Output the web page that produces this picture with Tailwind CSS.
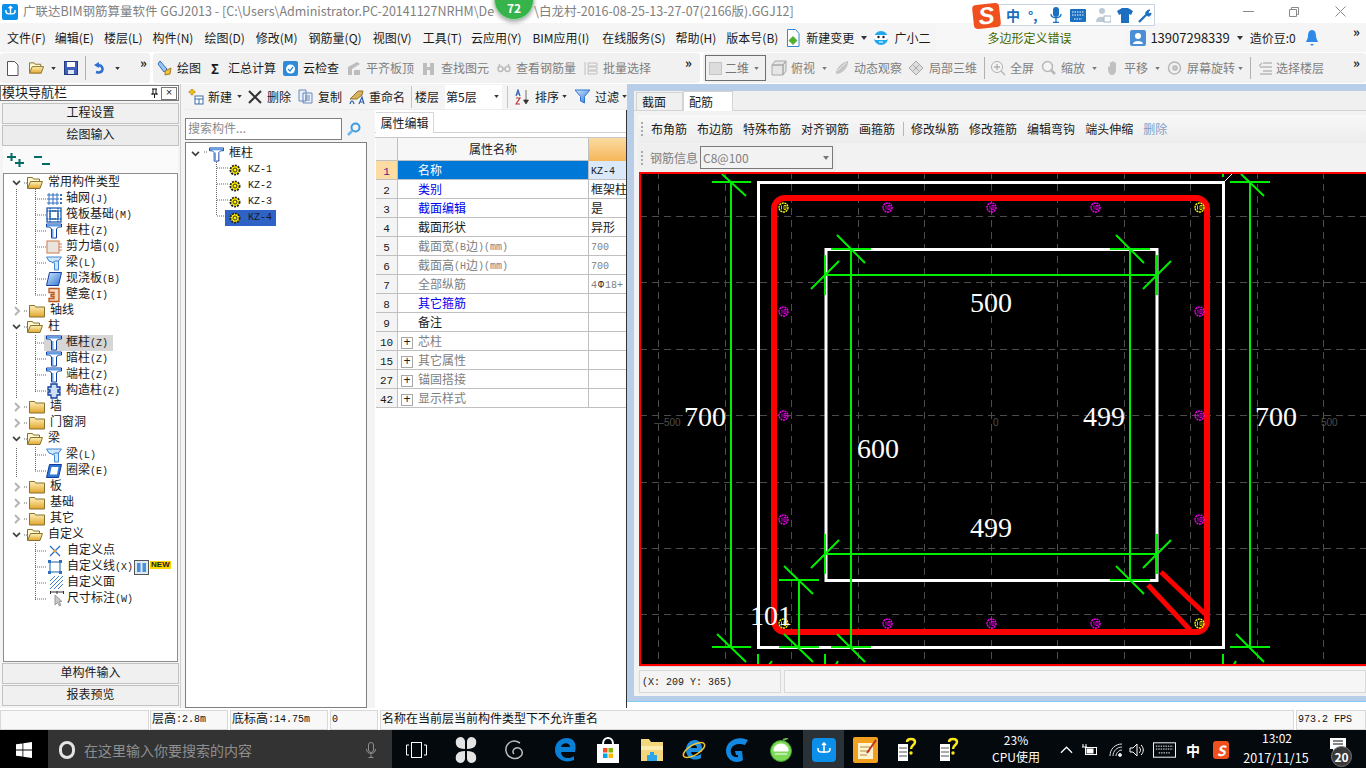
<!DOCTYPE html>
<html lang="zh">
<head>
<meta charset="utf-8">
<title>GGJ2013</title>
<script src="https://cdn.jsdelivr.net/npm/@tailwindcss/browser@4"></script>
</head>
<body class="bg-white">
<svg width="0" height="0" class="absolute">
  <defs>
    <linearGradient id="fg" x1="0" y1="0" x2="0" y2="1"><stop offset="0" stop-color="#fff3b8"/><stop offset="1" stop-color="#e0a52c"/></linearGradient>
    <linearGradient id="bl" x1="0" y1="0" x2="1" y2="1"><stop offset="0" stop-color="#cfe6ff"/><stop offset="1" stop-color="#2f76d2"/></linearGradient>
    <symbol id="c" viewBox="0 0 6 4"><path d="M0 0h6L3 4z" fill="#333"/></symbol>
    <symbol id="cg" viewBox="0 0 6 4"><path d="M0 0h6L3 4z" fill="#777"/></symbol>
    <symbol id="down" viewBox="0 0 10 7"><path d="M1 1l4 4 4-4" fill="none" stroke="#404040" stroke-width="2"/></symbol>
    <symbol id="right" viewBox="0 0 7 10"><path d="M1 1l4 4-4 4" fill="none" stroke="#b5b5b5" stroke-width="2"/></symbol>
    <symbol id="fc" viewBox="0 0 16 14"><path d="M.5 3V1.500h5l1 1.500h9v10H.5z" fill="url(#fg)" stroke="#86712e"/></symbol>
    <symbol id="fo" viewBox="0 0 16 14"><path d="M.5 12V1.500h5l1 1.500h6v2.500" fill="#fff7d2" stroke="#86712e"/><path d="M.5 12.500L3.500 5.500h12L13 12.500z" fill="url(#fg)" stroke="#86712e"/></symbol>
    <symbol id="t" viewBox="0 0 16 16"><path d="M.5 1h15v3h-3l-2 2v9h-5V6l-2-2h-3z" fill="#fff" stroke="#0f3c9e"/><path d="M1 1.500h14v2H1z" fill="#5a9ce6"/><path d="M6 6h1.500v8.500H6z" fill="#6fa8e8"/></symbol>
    <symbol id="gear" viewBox="0 0 12 12"><circle cx="6" cy="6" r="4.600" fill="#ffef00" stroke="#222" stroke-width="1.800" stroke-dasharray="2 1"/><circle cx="6" cy="6" r="2" fill="#ffef00" stroke="#333"/></symbol>
    <symbol id="mg" viewBox="0 0 11 11"><circle cx="5.500" cy="5.500" r="4.500" fill="none" stroke="#ff00ff" stroke-width="1.300" stroke-dasharray="2 .7"/><path d="M4 3.500v4M6 3.500h2v4H6z" fill="none" stroke="#ff00ff" stroke-width=".8"/></symbol>
    <symbol id="yl" viewBox="0 0 11 11"><circle cx="5.500" cy="5.500" r="4.500" fill="none" stroke="#ffff00" stroke-width="1.300" stroke-dasharray="2 .7"/><path d="M3.500 3.500v4M6 3.500h2v4H6z" fill="none" stroke="#ffff00" stroke-width=".8"/></symbol>
    <symbol id="beam" viewBox="0 0 16 16"><path d="M.5 2h15l-3 4v9h-4V8L3 6z" fill="#cfe6fb" stroke="#3e86d6"/><path d="M6 8l3-2 3.500 0" fill="none" stroke="#3e86d6"/></symbol>
    <symbol id="plate" viewBox="0 0 16 16"><path d="M3.500 1.500h12l-3 13H.5z" fill="url(#bl)" stroke="#0f3c9e"/></symbol>
  </defs>
</svg>

<div class="relative w-[1366px] h-[768px] overflow-hidden flex flex-col whitespace-nowrap text-xs leading-none text-[#1a1a1a] font-['Noto_Sans_CJK_SC','Noto_Sans',sans-serif] bg-[#f4f4f4]">

  <!-- title bar -->
  <header class="h-[23px] bg-white flex items-center shrink-0">
    <div class="ml-[2px] w-[16px] h-[16px] rounded-[2px] bg-[#0b8fe8] flex items-center justify-center shrink-0">
      <svg viewBox="0 0 14 14" class="w-[13px] h-[13px]" fill="none" stroke="#fff" stroke-width="1.500"><path d="M7 1.500v8M2 5.500v1a3 3 0 0 0 3 3h4a3 3 0 0 0 3-3v-1M5 3.500l2-2 2 2"/></svg>
    </div>
    <span class="ml-[5px] w-[471px] shrink-0 text-[12.5px] text-[#808080]">广联达BIM钢筋算量软件 GGJ2013 - [C:\Users\Administrator.PC-20141127NRHM\De</span>
    <span class="ml-[40px] text-[12.5px] text-[#808080]">\白龙村-2016-08-25-13-27-07(2166版).GGJ12]</span>
    <div class="ml-auto flex items-center text-[#8a8a8a]">
      <div class="w-[11px] h-px bg-[#8a8a8a] mr-[35px]"></div>
      <svg viewBox="0 0 10 10" class="w-[10px] h-[10px] mr-[36px]" fill="none" stroke="#8a8a8a"><path d="M.5 2.500h7v7h-7zM2.500 2.500v-2h7v7h-2"/></svg>
      <svg viewBox="0 0 11 11" class="w-[11px] h-[11px] mr-[20px]" fill="none" stroke="#8a8a8a"><path d="M.5.500l10 10M10.500.500l-10 10"/></svg>
    </div>
  </header>

  <!-- menu bar -->
  <nav class="h-[29px] bg-[#f5f5f5] flex items-center shrink-0 text-[12px]">
    <span class="ml-[7px]">文件(F)</span>
    <span class="ml-[9px]">编辑(E)</span>
    <span class="ml-[10px]">楼层(L)</span>
    <span class="ml-[10px]">构件(N)</span>
    <span class="ml-[11px]">绘图(D)</span>
    <span class="ml-[11px]">修改(M)</span>
    <span class="ml-[11px]">钢筋量(Q)</span>
    <span class="ml-[11px]">视图(V)</span>
    <span class="ml-[11px]">工具(T)</span>
    <span class="ml-[9px]">云应用(Y)</span>
    <span class="ml-[11px]">BIM应用(I)</span>
    <span class="ml-[13px]">在线服务(S)</span>
    <span class="ml-[10px]">帮助(H)</span>
    <span class="ml-[10px]">版本号(B)</span>
    <svg viewBox="0 0 14 18" class="ml-[8px] w-[14px] h-[18px] shrink-0"><path d="M1.500.500h8l3.500 4v13h-11.500z" fill="#fff" stroke="#3a87d0"/><path d="M7 7l4.500 4.500L7 16l-4.500-4.500z" fill="#55b030"/></svg>
    <span class="ml-[6px]">新建变更</span>
    <svg class="ml-[7px] w-[6px] h-[4px] shrink-0"><use href="#c"/></svg>
    <svg viewBox="0 0 16 16" class="ml-[6px] w-[16px] h-[16px] shrink-0"><circle cx="8" cy="8" r="7" fill="#1fa8ec"/><path d="M1 5h14v3a2 2 0 0 1-2 2H3a2 2 0 0 1-2-2z" fill="#fff"/><circle cx="5.500" cy="7" r="1.200" fill="#123"/><circle cx="10.500" cy="7" r="1.200" fill="#123"/><path d="M6 12h4" stroke="#fff"/></svg>
    <span class="ml-[5px]">广小二</span>
    <div class="ml-[6px] w-[188px] h-[27px] rounded-[3px] bg-[#f7f7f7] flex items-center pl-[51px]">
      <span class="text-[#3f6a00]">多边形定义错误</span>
    </div>
    <svg viewBox="0 0 16 16" class="ml-[6px] w-[16px] h-[16px] shrink-0"><rect width="16" height="16" rx="2" fill="#4a8fd6"/><circle cx="8" cy="6" r="3" fill="#fff"/><path d="M3 14c0-4 10-4 10 0z" fill="#fff"/></svg>
    <span class="ml-[4px] text-[13px]">13907298339</span>
    <svg class="ml-[7px] w-[6px] h-[4px] shrink-0"><use href="#c"/></svg>
    <span class="ml-[7px]">造价豆:0</span>
    <svg viewBox="0 0 12 18" class="ml-[10px] w-[12px] h-[18px] shrink-0"><path d="M6 1c3 0 4 3 4 6 0 3 2 5 2 6H0c0-1 2-3 2-6 0-3 1-6 4-6z" fill="#2f8ae6"/><path d="M4 15h4l-2 2z" fill="#2f8ae6"/></svg>
    <span class="ml-auto mr-[6px] -mt-[12px] font-bold text-[13px]">»</span>
  </nav>

  <!-- tool bar -->
  <div class="h-[32px] flex items-center shrink-0 bg-white text-[12px]">
    <div class="w-[150px] h-[30px] bg-[#f1f1f1] rounded-[3px] flex items-center shrink-0">
      <svg viewBox="0 0 13 15" class="ml-[6px] w-[13px] h-[15px] shrink-0"><path d="M1.500.500h7l3.500 3.500v10.500H1.500z" fill="#fff" stroke="#555"/></svg>
      <svg viewBox="0 0 15 14" class="ml-[10px] w-[15px] h-[14px] shrink-0"><use href="#fo"/></svg>
      <svg class="ml-[7px] w-[5px] h-[3px] shrink-0"><use href="#c"/></svg>
      <svg viewBox="0 0 14 14" class="ml-[8px] w-[14px] h-[14px] shrink-0"><rect x=".5" y=".5" width="13" height="13" fill="#3f5fb8" stroke="#243a80"/><rect x="3" y="1" width="8" height="5" fill="#fff"/><rect x="4" y="9" width="6" height="4" fill="#dfe6f5"/></svg>
      <div class="ml-[7px] w-px h-[24px] bg-[#b0b0b0] shrink-0"></div>
      <svg viewBox="0 0 13 14" class="ml-[7px] w-[13px] h-[14px] shrink-0" fill="none"><path d="M3 11c7 2 9-5 3-7" stroke="#2e6fd0" stroke-width="2.500"/><path d="M1 4l5-3v6z" fill="#2e6fd0"/></svg>
      <svg class="ml-[9px] w-[5px] h-[3px] shrink-0"><use href="#c"/></svg>
      <span class="ml-[20px] font-bold text-[13px] -mt-[12px]">»</span>
    </div>
    <div class="ml-[3px] w-[547px] h-[30px] bg-[#f1f1f1] rounded-[3px] flex items-center shrink-0">
      <svg viewBox="0 0 15 16" class="ml-[4px] w-[15px] h-[16px] shrink-0"><path d="M3 1l7 8-3 3-6-8z" fill="#9cc4ee" stroke="#2e6fb8"/><path d="M8 11l6-3-1 6-5 1z" fill="#f0c040" stroke="#a87a20"/></svg>
      <span class="ml-[5px]">绘图</span>
      <span class="ml-[10px] w-[9px] font-bold text-[13px]">Σ</span>
      <span class="ml-[8px]">汇总计算</span>
      <svg viewBox="0 0 15 15" class="ml-[7px] w-[15px] h-[15px] shrink-0"><rect width="15" height="15" rx="2" fill="#2e8bd8"/><circle cx="7.500" cy="8" r="4.500" fill="#fff"/><path d="M5 8l2 2 3-4" stroke="#2e8bd8" fill="none" stroke-width="1.300"/></svg>
      <span class="ml-[5px]">云检查</span>
      <svg viewBox="0 0 15 15" class="ml-[8px] w-[15px] h-[15px] shrink-0" fill="#bdbdbd"><path d="M1 6l9-5 3 2-8 5v6H1zM7 9h6v5H7z"/></svg>
      <span class="ml-[4px] text-[#7f7f7f]">平齐板顶</span>
      <svg viewBox="0 0 15 15" class="ml-[7px] w-[15px] h-[15px] shrink-0" fill="#bdbdbd"><path d="M2 2h4v4h3V2h4v12H9V9H6v5H2z"/></svg>
      <span class="ml-[5px] text-[#7f7f7f]">查找图元</span>
      <svg viewBox="0 0 14 14" class="ml-[8px] w-[14px] h-[14px] shrink-0" fill="none" stroke="#bdbdbd" stroke-width="1.500"><circle cx="3.500" cy="8" r="2.500"/><circle cx="10.500" cy="8" r="2.500"/><path d="M6 8h2M1 7l2-4M13 7l-2-4"/></svg>
      <span class="ml-[5px] text-[#7f7f7f]">查看钢筋量</span>
      <svg viewBox="0 0 14 15" class="ml-[8px] w-[14px] h-[15px] shrink-0" fill="none" stroke="#c0c0c0"><path d="M1 1v13M4 2h9v3H4zM4 6h9v3H4zM4 10h9v3H4z"/></svg>
      <span class="ml-[5px] text-[#7f7f7f]">批量选择</span>
      <span class="ml-[34px] font-bold text-[13px] -mt-[12px]">»</span>
    </div>
    <div class="ml-[3px] flex-1 h-[30px] bg-[#f1f1f1] rounded-[3px] flex items-center">
      <div class="ml-[2px] w-[61px] h-[26px] border border-[#6e6e6e] flex items-center shrink-0">
        <div class="ml-[3px] w-[13px] h-[13px] bg-[#dcdcdc] border border-[#c4c4c4]"></div>
        <span class="ml-[3px] text-[#777]">二维</span>
        <svg class="ml-[5px] w-[5px] h-[3px] shrink-0"><use href="#cg"/></svg>
      </div>
      <svg viewBox="0 0 16 16" class="ml-[5px] w-[16px] h-[16px] shrink-0" fill="#e6e6e6" stroke="#a8a8a8"><path d="M1 5l3-4h11l-3 4zM1 5h11v10H1zM12 5l3-4v10l-3 4z"/></svg>
      <span class="ml-[4px] text-[#7f7f7f]">俯视</span>
      <svg class="ml-[7px] w-[5px] h-[3px] shrink-0"><use href="#cg"/></svg>
      <svg viewBox="0 0 16 16" class="ml-[7px] w-[16px] h-[16px] shrink-0" fill="#c4c4c4"><path d="M2 14C1 9 8 2 14 1c1 5-5 13-12 13z"/><path d="M3 11L12 3" stroke="#eee"/></svg>
      <span class="ml-[4px] text-[#7f7f7f]">动态观察</span>
      <svg viewBox="0 0 16 16" class="ml-[6px] w-[16px] h-[16px] shrink-0" fill="#ddd" stroke="#aaa"><path d="M1 8l7-7 7 7-7 7zM4.500 4.500l7 7M11.500 4.500l-7 7"/></svg>
      <span class="ml-[5px] text-[#7f7f7f]">局部三维</span>
      <div class="ml-[7px] w-px h-[22px] bg-[#b0b0b0] shrink-0"></div>
      <svg viewBox="0 0 16 16" class="ml-[5px] w-[16px] h-[16px] shrink-0" fill="none" stroke="#b0b0b0"><circle cx="7" cy="7" r="5.500" fill="#f4f4f4"/><path d="M11 11l4 4M4 7h6M7 4v6" stroke-width="1.300"/></svg>
      <span class="ml-[4px] text-[#7f7f7f]">全屏</span>
      <svg viewBox="0 0 15 16" class="ml-[7px] w-[15px] h-[16px] shrink-0" fill="none" stroke="#b8b8b8" stroke-width="1.500"><circle cx="6.500" cy="6.500" r="5" fill="#f4f4f4"/><path d="M10 10l4 4" stroke-width="2.500"/></svg>
      <span class="ml-[5px] text-[#7f7f7f]">缩放</span>
      <svg class="ml-[7px] w-[5px] h-[3px] shrink-0"><use href="#cg"/></svg>
      <svg viewBox="0 0 15 16" class="ml-[8px] w-[15px] h-[16px] shrink-0" fill="#c0c0c0"><path d="M3 8c0-2 2-2 2-1V3c0-1.500 2-1.500 2 0V2c0-1 2-1 2 0v1c0-1 2-1 2 0v7c0 3-2 5-4 5-3 0-4-3-4-7z"/></svg>
      <span class="ml-[4px] text-[#7f7f7f]">平移</span>
      <svg class="ml-[7px] w-[5px] h-[3px] shrink-0"><use href="#cg"/></svg>
      <svg viewBox="0 0 15 16" class="ml-[7px] w-[15px] h-[16px] shrink-0" fill="none" stroke="#b8b8b8" stroke-width="1.500"><circle cx="7.500" cy="8" r="6"/><circle cx="8" cy="8" r="2" fill="#ccc"/></svg>
      <span class="ml-[5px] text-[#7f7f7f]">屏幕旋转</span>
      <svg class="ml-[3px] w-[5px] h-[3px] shrink-0"><use href="#cg"/></svg>
      <div class="ml-[7px] w-px h-[22px] bg-[#b0b0b0] shrink-0"></div>
      <svg viewBox="0 0 15 15" class="ml-[7px] w-[15px] h-[15px] shrink-0" fill="none" stroke="#b8b8b8" stroke-width="1.300"><path d="M5 2h9M2 6h12M5 10h9M2 13h12M1 5l3-3"/></svg>
      <span class="ml-[3px] text-[#7f7f7f]">选择楼层</span>
      <span class="ml-auto mr-[6px] font-bold text-[13px] -mt-[12px]">»</span>
    </div>
  </div>

  <!-- main area -->
  <div class="h-[624px] flex shrink-0 bg-white">

    <!-- module navigation -->
    <aside class="w-[181px] shrink-0 pt-px flex flex-col bg-[#f4f4f4] border-r border-[#cfcfcf] font-['Liberation_Mono','Noto_Sans_CJK_SC',monospace]">
      <div class="h-[16px] mx-0 border border-[#7a7a7a] bg-white flex items-center w-[179px]">
        <span class="ml-px text-[13px]">模块导航栏</span>
        <svg viewBox="0 0 9 11" class="ml-[83px] w-[9px] h-[11px] shrink-0"><path d="M2 1h5M3 1v5H1.500h6H6V1M4.500 6v4" fill="none" stroke="#111"/></svg>
        <div class="ml-[2px] w-[16px] h-[13px] border border-[#777] flex items-center justify-center text-[11px]">×</div>
      </div>
      <div class="mt-[2px] ml-[2px] w-[177px] h-[21px] border border-[#c2c2c2] bg-[#f0f0f0] flex items-center justify-center">工程设置</div>
      <div class="mt-px ml-[2px] w-[177px] h-[21px] border border-[#c2c2c2] bg-[#ececec] flex items-center justify-center">绘图输入</div>
      <div class="ml-[3px] w-[175px] h-[27px] bg-[#fafafa] flex items-center">
        <svg viewBox="0 0 18 15" class="ml-[4px] w-[18px] h-[15px] shrink-0" fill="none" stroke="#006b66" stroke-width="2"><path d="M0 5h9M4.500 1v8M8 11h9M12.500 7v8"/></svg>
        <svg viewBox="0 0 18 12" class="ml-[8px] w-[18px] h-[12px] shrink-0" fill="none" stroke="#006b66" stroke-width="2"><path d="M1 3h8M9 10h8"/></svg>
      </div>
      <!-- tree -->
      <div class="relative ml-[3px] w-[175px] h-[489px] border border-[#8c8c8c] bg-white pt-px">
        <svg class="absolute left-0 top-0 w-[173px] h-[487px]" viewBox="4 173 173 487" fill="none" stroke="#666" stroke-dasharray="1 1">
          <path d="M16.500 188v115M16.500 332v65M16.500 447v30M35.500 188v106M35.500 334v57M35.500 446v24M35.500 542v57M24 182h3M24 310h3M24 326h3M24 406h3M24 422h3M24 438h3M24 486h3M24 502h3M24 518h3M24 534h3M35 198h11M35 214h11M35 230h11M35 246h11M35 262h11M35 278h11M35 294h11M35 342h9M35 358h11M35 374h11M35 390h11M35 454h11M35 470h11M35 550h11M35 566h11M35 582h11M35 598h11"/>
        </svg>
        <div class="relative">
          <div class="flex items-center h-4"><svg class="ml-2 w-[9px] h-[6px] shrink-0"><use href="#down"/></svg><svg class="ml-[6px] w-4 h-[14px] shrink-0"><use href="#fo"/></svg><span class="ml-[5px]">常用构件类型</span></div>
          <div class="flex items-center h-4 pl-[42px]"><svg viewBox="0 0 16 16" class="w-4 h-4 shrink-0" fill="none" stroke="#2f6fc0"><path d="M3 2v12M7 2v12M11 2v12M1 4h12M1 8h12M1 12h12"/><path d="M15 3v2M15 7v2M15 11v2" stroke-width="2"/></svg><span class="ml-1">轴网<span class="text-[10px]">(J)</span></span></div>
          <div class="flex items-center h-4 pl-[42px]"><svg viewBox="0 0 16 16" class="w-4 h-4 shrink-0" fill="none" stroke="#1f5fae" stroke-width="1.300"><rect x="1" y="1" width="14" height="14"/><rect x="4" y="4" width="8" height="8"/><path d="M1 4h14M1 12h14M4 1v14M12 1v14" stroke-dasharray="1.500 1"/></svg><span class="ml-1">筏板基础<span class="text-[10px]">(M)</span></span></div>
          <div class="flex items-center h-4 pl-[42px]"><svg class="w-4 h-4 shrink-0"><use href="#t"/></svg><span class="ml-1">框柱<span class="text-[10px]">(Z)</span></span></div>
          <div class="flex items-center h-4 pl-[42px]"><svg viewBox="0 0 16 16" class="w-4 h-4 shrink-0"><rect x="1" y="2" width="12" height="12" fill="#e9e4de" stroke="#d07a4a"/><path d="M13 5h3M13 8h3M13 11h3" stroke="#d07a4a"/></svg><span class="ml-1">剪力墙<span class="text-[10px]">(Q)</span></span></div>
          <div class="flex items-center h-4 pl-[42px]"><svg class="w-4 h-4 shrink-0"><use href="#beam"/></svg><span class="ml-1">梁<span class="text-[10px]">(L)</span></span></div>
          <div class="flex items-center h-4 pl-[42px]"><svg class="w-4 h-4 shrink-0"><use href="#plate"/></svg><span class="ml-1">现浇板<span class="text-[10px]">(B)</span></span></div>
          <div class="flex items-center h-4 pl-[42px]"><svg viewBox="0 0 16 16" class="w-4 h-4 shrink-0" fill="#f6d8bf" stroke="#b85a20" stroke-width="1.300"><path d="M3 1.500h10v13H3v-3h5v-2H5v-2h3v-2H3z"/></svg><span class="ml-1">壁龛<span class="text-[10px]">(I)</span></span></div>
          <div class="flex items-center h-4"><svg class="ml-[10px] w-[7px] h-[10px] shrink-0 mr-[2px]"><use href="#right"/></svg><svg class="ml-[6px] w-4 h-[14px] shrink-0"><use href="#fc"/></svg><span class="ml-[5px]">轴线</span></div>
          <div class="flex items-center h-4"><svg class="ml-2 w-[9px] h-[6px] shrink-0"><use href="#down"/></svg><svg class="ml-[6px] w-4 h-[14px] shrink-0"><use href="#fo"/></svg><span class="ml-[5px]">柱</span></div>
          <div class="flex items-center h-4 pl-[40px]"><div class="flex items-center h-4 w-[69px] bg-[#d6d6d6] pl-[2px]"><svg class="w-4 h-4 shrink-0"><use href="#t"/></svg><span class="ml-1">框柱<span class="text-[10px]">(Z)</span></span></div></div>
          <div class="flex items-center h-4 pl-[42px]"><svg class="w-4 h-4 shrink-0"><use href="#t"/></svg><span class="ml-1">暗柱<span class="text-[10px]">(Z)</span></span></div>
          <div class="flex items-center h-4 pl-[42px]"><svg class="w-4 h-4 shrink-0"><use href="#t"/></svg><span class="ml-1">端柱<span class="text-[10px]">(Z)</span></span></div>
          <div class="flex items-center h-4 pl-[42px]"><svg viewBox="0 0 16 16" class="w-4 h-4 shrink-0" fill="#cfe0f6" stroke="#123f9c" stroke-width="1.300"><path d="M5 1h6v3h3v3h-2v2h2v3h-3v3H5v-3H2V9h2V7H2V4h3z"/></svg><span class="ml-1">构造柱<span class="text-[10px]">(Z)</span></span></div>
          <div class="flex items-center h-4"><svg class="ml-[10px] w-[7px] h-[10px] shrink-0 mr-[2px]"><use href="#right"/></svg><svg class="ml-[6px] w-4 h-[14px] shrink-0"><use href="#fc"/></svg><span class="ml-[5px]">墙</span></div>
          <div class="flex items-center h-4"><svg class="ml-[10px] w-[7px] h-[10px] shrink-0 mr-[2px]"><use href="#right"/></svg><svg class="ml-[6px] w-4 h-[14px] shrink-0"><use href="#fc"/></svg><span class="ml-[5px]">门窗洞</span></div>
          <div class="flex items-center h-4"><svg class="ml-2 w-[9px] h-[6px] shrink-0"><use href="#down"/></svg><svg class="ml-[6px] w-4 h-[14px] shrink-0"><use href="#fo"/></svg><span class="ml-[5px]">梁</span></div>
          <div class="flex items-center h-4 pl-[42px]"><svg class="w-4 h-4 shrink-0"><use href="#beam"/></svg><span class="ml-1">梁<span class="text-[10px]">(L)</span></span></div>
          <div class="flex items-center h-4 pl-[42px]"><svg viewBox="0 0 16 16" class="w-4 h-4 shrink-0"><path d="M3.500 1.500h12l-3 13H.5z" fill="#2f76d2" stroke="#0f3c9e"/><path d="M5.500 4h7l-1.500 7.500H4z" fill="#fff"/></svg><span class="ml-1">圈梁<span class="text-[10px]">(E)</span></span></div>
          <div class="flex items-center h-4"><svg class="ml-[10px] w-[7px] h-[10px] shrink-0 mr-[2px]"><use href="#right"/></svg><svg class="ml-[6px] w-4 h-[14px] shrink-0"><use href="#fc"/></svg><span class="ml-[5px]">板</span></div>
          <div class="flex items-center h-4"><svg class="ml-[10px] w-[7px] h-[10px] shrink-0 mr-[2px]"><use href="#right"/></svg><svg class="ml-[6px] w-4 h-[14px] shrink-0"><use href="#fc"/></svg><span class="ml-[5px]">基础</span></div>
          <div class="flex items-center h-4"><svg class="ml-[10px] w-[7px] h-[10px] shrink-0 mr-[2px]"><use href="#right"/></svg><svg class="ml-[6px] w-4 h-[14px] shrink-0"><use href="#fc"/></svg><span class="ml-[5px]">其它</span></div>
          <div class="flex items-center h-4"><svg class="ml-2 w-[9px] h-[6px] shrink-0"><use href="#down"/></svg><svg class="ml-[6px] w-4 h-[14px] shrink-0"><use href="#fo"/></svg><span class="ml-[5px]">自定义</span></div>
          <div class="flex items-center h-4 pl-[44px]"><svg viewBox="0 0 14 14" class="w-[14px] h-[14px] shrink-0" fill="none"><path d="M2 2l10 10M12 2L2 12" stroke="#2f6fc0" stroke-width="1.300"/><circle cx="7" cy="7" r="1.300" fill="#e8a020"/></svg><span class="ml-[5px]">自定义点</span></div>
          <div class="flex items-center h-4 pl-[44px]"><svg viewBox="0 0 14 14" class="w-[14px] h-[14px] shrink-0" fill="#2f6fc0"><path d="M2 2h10v10H2z" fill="none" stroke="#1f5fae"/><rect width="3" height="3"/><rect x="11" width="3" height="3"/><rect y="11" width="3" height="3"/><rect x="11" y="11" width="3" height="3"/></svg><span class="ml-[5px]">自定义线<span class="text-[10px]">(X)</span></span><svg viewBox="0 0 15 15" class="ml-px w-[15px] h-[15px] shrink-0"><rect x=".5" y=".5" width="14" height="14" fill="#dce9f7" stroke="#555"/><path d="M3 3h3.500v9H3zM8.500 3H12v9H8.500z" fill="#4a90d9"/></svg><span class="ml-px -mt-[5px] px-px bg-[#ffd500] text-[8px] font-bold leading-[8px] font-['Liberation_Sans',sans-serif]">NEW</span></div>
          <div class="flex items-center h-4 pl-[46px]"><svg viewBox="0 0 14 14" class="w-[14px] h-[14px] shrink-0" fill="none" stroke="#3f7fcf"><path d="M0 5L5 0M0 9L9 0M0 13L13 0M4 13L13 4M8 13l5-5"/></svg><span class="ml-[3px]">自定义面</span></div>
          <div class="flex items-center h-4 pl-[46px]"><svg viewBox="0 0 14 16" class="w-[14px] h-[16px] shrink-0" fill="none"><path d="M0 1h14M.5 0v3M13.500 0v3M7 0v3" stroke="#333"/><path d="M5 4v10l2.500-2.500 2 3.500 1.500-1-2-3.500h3z" fill="#c8c8c8" stroke="#999"/></svg><span class="ml-[3px]">尺寸标注<span class="text-[10px]">(W)</span></span></div>
        </div>
      </div>
      <div class="mt-px ml-[2px] w-[177px] h-[21px] border border-[#c2c2c2] bg-[#f0f0f0] flex items-center justify-center">单构件输入</div>
      <div class="mt-px ml-[2px] w-[177px] h-[21px] border border-[#c2c2c2] bg-[#f0f0f0] flex items-center justify-center">报表预览</div>
    </aside>

    <!-- component area -->
    <section class="w-[446px] shrink-0 flex flex-col bg-[#f4f4f4]">
      <div class="h-[26px] ml-[3px] flex items-center shrink-0 border-b border-[#ececec] text-[12px]">
        <svg viewBox="0 0 16 16" class="ml-[4px] w-4 h-4 shrink-0"><path d="M3 0h2v2h2v2H5v2H3V4H1V2h2z" fill="#f0c020" stroke="#b08010" stroke-width=".5"/><rect x="7" y="7" width="8" height="8" fill="#fff" stroke="#3a6ea8"/><path d="M7 10h8M11 10v5" stroke="#3a6ea8"/></svg>
        <span class="ml-1">新建</span>
        <svg class="ml-[5px] w-[5px] h-[3px] shrink-0"><use href="#c"/></svg>
        <svg viewBox="0 0 14 14" class="ml-[6px] w-[14px] h-[14px] shrink-0"><path d="M1 1l12 12M13 1L1 13" stroke="#333" stroke-width="2"/></svg>
        <span class="ml-[5px]">删除</span>
        <svg viewBox="0 0 15 15" class="ml-[7px] w-[15px] h-[15px] shrink-0" fill="#e7f0fb" stroke="#6a8ab5"><path d="M1 1h7v11H1zM5 4h9v10H5z"/><path d="M7 7h5M7 9h5M7 11h5"/></svg>
        <span class="ml-[5px]">复制</span>
        <svg viewBox="0 0 16 16" class="ml-[7px] w-4 h-4 shrink-0"><path d="M1 10l8-8 5 0-1 4-5 4z" fill="#d6b25a" stroke="#93762e"/><path d="M1 15c1-4 3-4 4 0M10 15l3-7 2 7M11 13h3" fill="none" stroke="#2f5fb0" stroke-width="1.200"/></svg>
        <span class="ml-1">重命名</span>
        <div class="ml-[6px] w-px h-[22px] bg-[#c4c4c4] shrink-0"></div>
        <span class="ml-[3px]">楼层</span>
        <div class="ml-[6px] w-[60px] h-[24px] bg-white flex items-center pl-px">第5层<svg class="ml-auto mr-[3px] w-[5px] h-[3px] shrink-0"><use href="#c"/></svg></div>
        <div class="ml-[5px] w-px h-[22px] bg-[#c4c4c4] shrink-0"></div>
        <svg viewBox="0 0 15 16" class="ml-[7px] w-[15px] h-4 shrink-0"><path d="M1 7l2-6 2 6M2 5h2" fill="none" stroke="#2f5fb0" stroke-width="1.200"/><path d="M1 9h4L1 15h4" fill="none" stroke="#c03030" stroke-width="1.200"/><path d="M11 1v12M8.500 11l2.500 4 2.500-4z" fill="#333" stroke="#333" stroke-width=".7"/></svg>
        <span class="ml-[5px]">排序</span>
        <svg class="ml-[3px] w-[5px] h-[3px] shrink-0"><use href="#c"/></svg>
        <svg viewBox="0 0 15 15" class="ml-[8px] w-[15px] h-[15px] shrink-0"><path d="M0 1h15L9.500 7.500V14L5.500 12V7.500z" fill="url(#bl)" stroke="#2f76d2"/></svg>
        <span class="ml-[5px]">过滤</span>
        <svg class="ml-[3px] w-[5px] h-[3px] shrink-0"><use href="#c"/></svg>
      </div>
      <div class="flex flex-1 min-h-0">
        <!-- component tree -->
        <div class="w-[185px] ml-[3px] shrink-0 flex flex-col pt-[8px] bg-[#f4f4f4]">
          <div class="flex h-[22px] shrink-0">
            <div class="w-[157px] h-[22px] ml-px border border-[#808080] bg-white flex items-center pl-[2px] pb-[3px] text-[#8a8a8a]">搜索构件...</div>
            <svg viewBox="0 0 14 14" class="ml-[5px] mt-[4px] w-[14px] h-[14px] shrink-0" fill="none"><circle cx="8.500" cy="5.500" r="4" stroke="#3f9be0" stroke-width="2"/><path d="M5.500 8.500L1 13" stroke="#6cb7ee" stroke-width="2.500"/></svg>
          </div>
          <div class="relative mt-[2px] ml-px w-[182px] flex-1 border border-[#808080] bg-white pt-[2px] font-['Liberation_Mono','Noto_Sans_CJK_SC',monospace]">
            <svg class="absolute left-0 top-0 w-[180px] h-[100px]" viewBox="186 143 180 100" fill="none" stroke="#666" stroke-dasharray="1 1"><path d="M216.500 160v56M217 168h11M217 184h11M217 200h11M217 216h8M204 152h3"/></svg>
            <div class="relative">
              <div class="flex items-center h-[16px] mt-[1px]"><svg class="ml-[5px] w-[9px] h-[6px] shrink-0"><use href="#down"/></svg><svg class="ml-[9px] w-[15px] h-[15px] shrink-0"><use href="#t"/></svg><span class="ml-[5px]">框柱</span></div>
              <div class="flex items-center h-[16px] pl-[43px]"><svg class="w-[12px] h-[12px] shrink-0"><use href="#gear"/></svg><span class="ml-[7px] text-[10px]">KZ-1</span></div>
              <div class="flex items-center h-[16px] pl-[43px]"><svg class="w-[12px] h-[12px] shrink-0"><use href="#gear"/></svg><span class="ml-[7px] text-[10px]">KZ-2</span></div>
              <div class="flex items-center h-[16px] pl-[43px]"><svg class="w-[12px] h-[12px] shrink-0"><use href="#gear"/></svg><span class="ml-[7px] text-[10px]">KZ-3</span></div>
              <div class="flex items-center h-[16px] ml-[39px] w-[51px] pl-[4px] bg-[#2f62c6]"><svg class="w-[12px] h-[12px] shrink-0"><use href="#gear"/></svg><span class="ml-[7px] text-[10px]">KZ-4</span></div>
            </div>
          </div>
        </div>
        <!-- property grid -->
        <div class="ml-[6px] flex-1 min-w-0 bg-white flex flex-col overflow-hidden border-r border-[#333]">
          <div class="h-[23px] flex items-end shrink-0 border-b border-[#d0d0d0] pl-px">
            <div class="w-[58px] h-[21px] bg-white border-r border-t border-[#d8d8d8] flex items-center justify-center -mb-px text-[12px]">属性编辑</div>
          </div>
          <div class="mt-[4px] w-[252px] flex flex-col border-t border-[#c8c8c8] [&>div>div]:pt-[4px] font-['Liberation_Mono','Noto_Sans_CJK_SC',monospace]">
            <div class="flex h-[23px]"><div class="w-[22px] ml-px bg-[#f4f4f4] border-r border-b border-[#c0c0c0]"></div><div class="w-[191px] bg-[#f7f7f7] border-r border-b border-[#c0c0c0] flex items-center justify-center">属性名称</div><div class="flex-1 bg-gradient-to-b from-[#fbdba0] to-[#f5b658]"></div></div>
            <div class="flex h-[19px]"><div class="w-[22px] ml-px bg-[#fddca4] border-r border-b border-[#c0c0c0] flex items-center justify-center text-[11px] text-[#5a1a80]">1</div><div class="w-[191px] bg-[#0078d7] border-r border-b border-[#c0c0c0] text-white flex items-center pl-[20px]">名称</div><div class="flex-1 bg-[#d9e9f9] border-b border-[#c0c0c0] flex items-center pl-[2px] text-[10px]">KZ-4</div></div>
            <div class="flex h-[19px]"><div class="w-[22px] ml-px bg-[#f4f4f4] border-r border-b border-[#c0c0c0] flex items-center justify-center text-[11px]">2</div><div class="w-[191px] border-r border-b border-[#c0c0c0] text-[#0000ee] flex items-center pl-[20px]">类别</div><div class="flex-1 border-b border-[#c0c0c0] flex items-center pl-[2px]">框架柱</div></div>
            <div class="flex h-[19px]"><div class="w-[22px] ml-px bg-[#f4f4f4] border-r border-b border-[#c0c0c0] flex items-center justify-center text-[11px]">3</div><div class="w-[191px] border-r border-b border-[#c0c0c0] text-[#0000ee] flex items-center pl-[20px]">截面编辑</div><div class="flex-1 border-b border-[#c0c0c0] flex items-center pl-[2px]">是</div></div>
            <div class="flex h-[19px]"><div class="w-[22px] ml-px bg-[#f4f4f4] border-r border-b border-[#c0c0c0] flex items-center justify-center text-[11px]">4</div><div class="w-[191px] border-r border-b border-[#c0c0c0] flex items-center pl-[20px]">截面形状</div><div class="flex-1 border-b border-[#c0c0c0] flex items-center pl-[2px]">异形</div></div>
            <div class="flex h-[19px]"><div class="w-[22px] ml-px bg-[#f4f4f4] border-r border-b border-[#c0c0c0] flex items-center justify-center text-[11px]">5</div><div class="w-[191px] border-r border-b border-[#c0c0c0] text-[#808080] flex items-center pl-[20px]">截面宽<span class="text-[10px]">(B</span>边<span class="text-[10px]">)(mm)</span></div><div class="flex-1 border-b border-[#c0c0c0] flex items-center pl-[2px] text-[10px] text-[#808080]">700</div></div>
            <div class="flex h-[19px]"><div class="w-[22px] ml-px bg-[#f4f4f4] border-r border-b border-[#c0c0c0] flex items-center justify-center text-[11px]">6</div><div class="w-[191px] border-r border-b border-[#c0c0c0] text-[#808080] flex items-center pl-[20px]">截面高<span class="text-[10px]">(H</span>边<span class="text-[10px]">)(mm)</span></div><div class="flex-1 border-b border-[#c0c0c0] flex items-center pl-[2px] text-[10px] text-[#808080]">700</div></div>
            <div class="flex h-[19px]"><div class="w-[22px] ml-px bg-[#f4f4f4] border-r border-b border-[#c0c0c0] flex items-center justify-center text-[11px]">7</div><div class="w-[191px] border-r border-b border-[#c0c0c0] text-[#808080] flex items-center pl-[20px]">全部纵筋</div><div class="flex-1 border-b border-[#c0c0c0] flex items-center pl-[2px] text-[10px] text-[#808080] overflow-hidden">4<span class="mx-px text-[#333]">Φ</span>18+</div></div>
            <div class="flex h-[19px]"><div class="w-[22px] ml-px bg-[#f4f4f4] border-r border-b border-[#c0c0c0] flex items-center justify-center text-[11px]">8</div><div class="w-[191px] border-r border-b border-[#c0c0c0] text-[#0000ee] flex items-center pl-[20px]">其它箍筋</div><div class="flex-1 border-b border-[#c0c0c0]"></div></div>
            <div class="flex h-[19px]"><div class="w-[22px] ml-px bg-[#f4f4f4] border-r border-b border-[#c0c0c0] flex items-center justify-center text-[11px]">9</div><div class="w-[191px] border-r border-b border-[#c0c0c0] flex items-center pl-[20px]">备注</div><div class="flex-1 border-b border-[#c0c0c0]"></div></div>
            <div class="flex h-[19px]"><div class="w-[22px] ml-px bg-[#f4f4f4] border-r border-b border-[#c0c0c0] flex items-center justify-center text-[11px]">10</div><div class="w-[191px] border-r border-b border-[#c0c0c0] text-[#808080] flex items-center pl-[3px]"><span class="w-[12px] h-[12px] border border-[#a8a8a8] text-[#222] flex items-center justify-center mr-[5px] text-[12px]">+</span>芯柱</div><div class="flex-1 border-b border-[#c0c0c0]"></div></div>
            <div class="flex h-[19px]"><div class="w-[22px] ml-px bg-[#f4f4f4] border-r border-b border-[#c0c0c0] flex items-center justify-center text-[11px]">15</div><div class="w-[191px] border-r border-b border-[#c0c0c0] text-[#808080] flex items-center pl-[3px]"><span class="w-[12px] h-[12px] border border-[#a8a8a8] text-[#222] flex items-center justify-center mr-[5px] text-[12px]">+</span>其它属性</div><div class="flex-1 border-b border-[#c0c0c0]"></div></div>
            <div class="flex h-[19px]"><div class="w-[22px] ml-px bg-[#f4f4f4] border-r border-b border-[#c0c0c0] flex items-center justify-center text-[11px]">27</div><div class="w-[191px] border-r border-b border-[#c0c0c0] text-[#808080] flex items-center pl-[3px]"><span class="w-[12px] h-[12px] border border-[#a8a8a8] text-[#222] flex items-center justify-center mr-[5px] text-[12px]">+</span>锚固搭接</div><div class="flex-1 border-b border-[#c0c0c0]"></div></div>
            <div class="flex h-[19px]"><div class="w-[22px] ml-px bg-[#f4f4f4] border-r border-b border-[#c0c0c0] flex items-center justify-center text-[11px]">42</div><div class="w-[191px] border-r border-b border-[#c0c0c0] text-[#808080] flex items-center pl-[3px]"><span class="w-[12px] h-[12px] border border-[#a8a8a8] text-[#222] flex items-center justify-center mr-[5px] text-[12px]">+</span>显示样式</div><div class="flex-1 border-b border-[#c0c0c0]"></div></div>
          </div>
        </div>
      </div>
    </section>

    <!-- section editor window -->
    <section class="flex-1 min-w-0 flex flex-col bg-[#b8cde8]">
      <div class="h-[7px] shrink-0"></div>
      <div class="flex-1 ml-[7px] flex flex-col bg-[#f2f2f2] min-h-0">
        <div class="h-[20px] flex items-end shrink-0 bg-[#f0f0f0] border-b border-[#d4d4d4] pl-[2px]">
          <div class="w-[47px] h-[18px] border border-b-0 border-[#d4d4d4] bg-[#f0f0f0] flex items-center pl-[5px] pt-px">截面</div>
          <div class="w-[50px] h-[20px] border border-b-0 border-[#d4d4d4] bg-white flex items-center pl-[5px] -mb-px">配筋</div>
        </div>
        <div class="h-[28px] mt-[4px] flex items-center shrink-0 bg-gradient-to-b from-[#f8f8f8] to-[#ececec] ml-[4px] pb-px">
          <div class="ml-[3px] w-[2px] h-[14px] border-l-2 border-dotted border-[#aaa]"></div>
          <span class="ml-[8px]">布角筋</span><span class="ml-[10px]">布边筋</span><span class="ml-[10px]">特殊布筋</span><span class="ml-[10px]">对齐钢筋</span><span class="ml-[10px]">画箍筋</span>
          <div class="ml-[8px] w-px h-[14px] bg-[#b8b8b8]"></div>
          <span class="ml-[7px]">修改纵筋</span><span class="ml-[10px]">修改箍筋</span><span class="ml-[10px]">编辑弯钩</span><span class="ml-[10px]">端头伸缩</span><span class="ml-[10px] text-[#7fa0c8]">删除</span>
        </div>
        <div class="h-[29px] flex items-center shrink-0 ml-[4px]">
          <div class="h-[28px] w-[198px] bg-[#efefef] rounded-[3px] flex items-center">
            <div class="ml-[3px] w-[2px] h-[14px] border-l-2 border-dotted border-[#aaa]"></div>
            <span class="ml-[7px] text-[#808080]">钢筋信息</span>
            <div class="ml-[2px] w-[133px] h-[23px] border border-[#7a7a7a] bg-[#f2f2f2] flex items-center pl-[2px] text-[#808080] text-[12px]">C8@100<svg class="ml-auto mr-[3px] w-[6px] h-[4px] shrink-0"><use href="#cg"/></svg></div>
          </div>
        </div>
        <div class="h-[494px] shrink-0 ml-[5px] bg-black overflow-hidden">
          <svg viewBox="639 172 727 494" class="block w-[727px] h-[494px]">
            <rect x="639" y="172" width="727" height="494" fill="#000"/>
            <g stroke="#4c4c4c" stroke-dasharray="7 5" fill="none">
              <path d="M658.500 172v494M725.500 172v494M791.500 172v494M858.500 172v494M924.500 172v494M991.500 172v494M1057.500 172v494M1124.500 172v494M1190.500 172v494M1257.500 172v494M1323.500 172v494"/>
              <path d="M640 216.500h726M640 282.500h726M640 349.500h726M640 415.500h726M640 482.500h726M640 548.500h726M640 614.500h726"/>
            </g>
            <g font-family="Liberation Sans" font-size="10" fill="#4f4f4f">
              <text x="654" y="426">—500</text><text x="993" y="426">0</text><text x="1321" y="426">500</text>
            </g>
            <rect x="758.500" y="182.500" width="465" height="465" fill="none" stroke="#fff" stroke-width="3"/>
            <rect x="826" y="249.500" width="331" height="331" fill="none" stroke="#fff" stroke-width="3"/>
            <rect x="774" y="198" width="433" height="434" rx="11" fill="none" stroke="#ff0000" stroke-width="6"/>
            <path d="M1148 585l42 45M1161 572l44 42" fill="none" stroke="#ff0000" stroke-width="5"/>
            <g stroke="#00ee00" stroke-width="2" fill="none">
              <path d="M731 182v465M712 182h39M722 174l24 22M712 647h39M717 634l29 28"/>
              <path d="M1250 182v465M1230 182h40M1241 174l23 22M1230 647h40M1236 634l28 28"/>
              <path d="M851 249v398M831 249h40M837 235l28 28M831 647h40M837 634l28 28"/>
              <path d="M1130 249v331M1110 249h40M1116 235l28 28M1110 580h40M1116 566l28 28"/>
              <path d="M826 275h331M1157 255v40M1143 289l28-28M825 255v40M811 289l28-28"/>
              <path d="M826 554h331M1157 534v40M1143 568l28-28M825 534v40M811 568l28-28"/>
              <path d="M799 580v67M779 580h40M784 566l29 28M779 647h40M784 634l29 28"/>
              <path d="M758 654v12M768 666l4-5M825 654v12M835 666l3-5M1223 654v12M1233 666l3-5M1223 174v3"/>
            </g>
            <path d="M1225 181l7-7" stroke="#fff"/>
            <g>
              <svg x="778" y="202" width="11" height="11"><use href="#yl"/></svg>
              <svg x="1194" y="202" width="11" height="11"><use href="#yl"/></svg>
              <svg x="778" y="618" width="11" height="11"><use href="#yl"/></svg>
              <svg x="1194" y="618" width="11" height="11"><use href="#yl"/></svg>
              <svg x="882" y="202" width="11" height="11"><use href="#mg"/></svg>
              <svg x="986" y="202" width="11" height="11"><use href="#mg"/></svg>
              <svg x="1090" y="202" width="11" height="11"><use href="#mg"/></svg>
              <svg x="882" y="618" width="11" height="11"><use href="#mg"/></svg>
              <svg x="986" y="618" width="11" height="11"><use href="#mg"/></svg>
              <svg x="1090" y="618" width="11" height="11"><use href="#mg"/></svg>
              <svg x="778" y="306" width="11" height="11"><use href="#mg"/></svg>
              <svg x="778" y="410" width="11" height="11"><use href="#mg"/></svg>
              <svg x="778" y="514" width="11" height="11"><use href="#mg"/></svg>
              <svg x="1194" y="306" width="11" height="11"><use href="#mg"/></svg>
              <svg x="1194" y="410" width="11" height="11"><use href="#mg"/></svg>
              <svg x="1194" y="514" width="11" height="11"><use href="#mg"/></svg>
            </g>
            <g fill="#fff" font-family="Liberation Serif" font-size="28" text-anchor="middle">
              <text x="705" y="426">700</text>
              <text x="1276" y="426">700</text>
              <text x="991" y="312">500</text>
              <text x="878" y="458">600</text>
              <text x="1104" y="426">499</text>
              <text x="991" y="537">499</text>
              <text x="771" y="625">101</text>
            </g>
            <path d="M640 172v494M639 173h727M639 665h727" stroke="#ff0000" stroke-width="2" fill="none"/>
          </svg>
        </div>
        <div class="h-[27px] shrink-0 flex items-end bg-[#f2f2f2] border-t border-[#dcdcdc] ml-[5px] pb-0">
          <div class="w-[142px] h-[23px] bg-[#f4f4f4] border border-[#d8d8d8] flex items-center pl-[2px] pt-[2px] text-[10px] font-['Liberation_Mono',monospace]">(X: 209 Y: 365)</div>
          <div class="ml-[3px] flex-1 h-[23px] bg-[#f6f6f6] border border-[#d8d8d8]"></div>
        </div>
      </div>
      <div class="h-[5px] shrink-0 ml-[7px] bg-[#b8cde8]"></div>
      <div class="h-px shrink-0 bg-[#7fc8ee]"></div>
      <div class="h-[6px] shrink-0 bg-white"></div>
    </section>
  </div>

  <!-- status bar -->
  <footer class="h-[22px] shrink-0 flex items-stretch pt-[2px] bg-white text-[#111] font-['Liberation_Mono','Noto_Sans_CJK_SC',monospace]">
    <div class="w-[149px] border border-[#d8d8d8] bg-[#f8f8f8]"></div>
    <div class="ml-px w-[78px] border border-[#d8d8d8] bg-[#f8f8f8] flex items-center pl-px">层高<span class="text-[10px]">:2.8m</span></div>
    <div class="ml-[2px] w-[98px] border border-[#d8d8d8] bg-[#f8f8f8] flex items-center pl-px">底标高<span class="text-[10px]">:14.75m</span></div>
    <div class="ml-[2px] w-[48px] border border-[#d8d8d8] bg-[#f8f8f8] flex items-center pl-px text-[10px]">0</div>
    <div class="ml-[2px] w-[914px] border border-[#d8d8d8] bg-[#f8f8f8] flex items-center pl-px">名称在当前层当前构件类型下不允许重名</div>
    <div class="ml-[2px] flex-1 border border-[#d8d8d8] bg-[#f8f8f8] flex items-center pl-px text-[10px]">973.2 FPS</div>
  </footer>

  <!-- taskbar -->
  <div class="relative h-[40px] shrink-0 flex items-center bg-[#04090d] text-white">
    <div class="w-[48px] h-full bg-black flex items-center justify-center shrink-0">
      <svg viewBox="0 0 16 16" class="w-[16px] h-[16px] -ml-[1px]" fill="#fff"><path d="M0 2.300l6.500-.9v6.200H0zM7.300 1.300L16 0v7.600H7.300zM0 8.400h6.500v6.200L0 13.700zM7.300 8.400H16V16l-8.700-1.300z"/></svg>
    </div>
    <div class="w-[344px] h-full bg-[#333] flex items-center shrink-0">
      <div class="ml-[11px] w-[16px] h-[18px] rounded-full border-[3px] border-[#e4e4e4]"></div>
      <span class="ml-[9px] text-[14px] text-[#8e8e8e]">在这里输入你要搜索的内容</span>
      <svg viewBox="0 0 10 16" class="ml-auto mr-[16px] w-[10px] h-[16px] shrink-0" fill="none" stroke="#8e8e8e"><rect x="2.500" y=".5" width="5" height="10" rx="2.500"/><path d="M.5 7c0 6 9 6 9 0M5 12.500v3M2.500 15.500h5"/></svg>
    </div>
    <svg viewBox="0 0 21 16" class="ml-[14px] w-[21px] h-[16px] shrink-0" fill="none" stroke="#fff"><rect x="5.500" y=".5" width="10" height="15"/><path d="M3 3H.5v10H3M18 3h2.500v10H18"/></svg>
    <svg viewBox="0 0 22 28" class="ml-[28px] w-[22px] h-[28px] shrink-0" fill="#e4e4e4"><path d="M10 13C2 13 0 9 1 4c2-4 8-4 9 1zM12 13c8 0 10-4 9-9-2-4-8-4-9 1zM10 15c-8 0-10 4-9 9 2 4 8 4 9-1zM12 15c8 0 10 4 9 9-2 4-8 4-9-1z"/></svg>
    <svg viewBox="0 0 20 22" class="ml-[27px] w-[20px] h-[22px] shrink-0" fill="none" stroke="#bdbdbd" stroke-width="1.500"><path d="M16 4C8-1 1 5 2 12c1 7 10 10 15 5 3-4 0-9-5-8-3 1-4 4-2 6"/></svg>
    <svg viewBox="0 0 22 24" class="ml-[31px] w-[22px] h-[24px] shrink-0"><path d="M20 14H6c0 6 8 8 13 4v4C10 26 0 21 0 12 0 4 6 0 12 0c7 0 10 6 8 14zM15 9c0-5-8-5-9 0z" fill="#0a7fd6"/></svg>
    <svg viewBox="0 0 24 26" class="ml-[19px] w-[24px] h-[26px] shrink-0"><path d="M1 7h22v19H1z" fill="#fff"/><path d="M7 7c0-8 10-8 10 0" fill="none" stroke="#fff" stroke-width="2"/><rect x="7" y="11" width="4.500" height="4.500" fill="#f25022"/><rect x="12.500" y="11" width="4.500" height="4.500" fill="#7fba00"/><rect x="7" y="16.500" width="4.500" height="4.500" fill="#00a4ef"/><rect x="12.500" y="16.500" width="4.500" height="4.500" fill="#ffb900"/></svg>
    <svg viewBox="0 0 22 22" class="ml-[21px] w-[22px] h-[22px] shrink-0"><path d="M0 0h8l2 3h12v19H0z" fill="#f4d67c"/><path d="M0 7h22v4H0z" fill="#fcecb0"/><path d="M6 22v-6h3v-3h4v3h3v6z" fill="#2ba4e8"/></svg>
    <svg viewBox="0 0 26 26" class="ml-[18px] w-[26px] h-[26px] shrink-0"><path d="M21 15H10c0 4 6 5 10 2v4c-7 4-15 0-15-8 0-6 4-10 9-10s8 5 7 12zM16 11c0-4-6-4-6 0z" fill="#1c8fe0"/><ellipse cx="13" cy="13" rx="12" ry="5" fill="none" stroke="#f2c230" stroke-width="1.500" transform="rotate(-30 13 13)"/></svg>
    <svg viewBox="0 0 24 26" class="ml-[18px] w-[24px] h-[26px] shrink-0"><path d="M23 3C11-2 1 5 1 14c0 9 10 14 17 9l-1-9h-7l1 4h2v2c-6 1-8-4-7-8 2-5 8-6 14-4z" fill="#1388e0"/></svg>
    <svg viewBox="0 0 24 24" class="ml-[20px] w-[24px] h-[24px] shrink-0"><circle cx="12" cy="13" r="10.500" fill="#7ed957" stroke="#3c9f2a"/><path d="M5 12c0-8 14-8 14 0v1H5zM6 16h12" fill="#fff" stroke="#fff"/><path d="M14 2l5-2" stroke="#6ab04c" stroke-width="2"/></svg>
    <div class="ml-[10px] w-[41px] h-full bg-[#2a3238] flex items-center justify-center shrink-0">
      <div class="w-[24px] h-[24px] rounded-[4px] bg-[#0b8fe8] flex items-center justify-center">
        <svg viewBox="0 0 14 16" class="w-[14px] h-[16px]" fill="none" stroke="#fff" stroke-width="1.500"><path d="M7 1v10M1 6v1a3 3 0 0 0 3 3h6a3 3 0 0 0 3-3V6M5 3l2-2 2 2"/></svg>
      </div>
    </div>
    <svg viewBox="0 0 25 26" class="ml-[9px] w-[25px] h-[26px] shrink-0"><rect width="25" height="26" rx="2" fill="#f2a020"/><path d="M5 6h15v16H5z" fill="#fff5d0"/><path d="M7 10h10M7 14h10M7 18h7" stroke="#b88a40"/><path d="M14 16L23 3" stroke="#c03020" stroke-width="2"/></svg>
    <svg viewBox="0 0 20 26" class="ml-[19px] w-[20px] h-[26px] shrink-0"><rect x="1" y="7" width="10" height="17" fill="#fff"/><path d="M2 11h8M2 15h8M2 19h8" stroke="#555"/><path d="M10 5c0-4 8-4 8 0 0 3-4 3-4 7" fill="none" stroke="#ffe81a" stroke-width="2.500"/><circle cx="14" cy="16" r="1.700" fill="#ffe81a"/></svg>
    <svg viewBox="0 0 20 26" class="ml-[22px] w-[20px] h-[26px] shrink-0"><rect x="1" y="7" width="10" height="17" fill="#fff"/><path d="M2 11h8M2 15h8M2 19h8" stroke="#555"/><path d="M10 5c0-4 8-4 8 0 0 3-4 3-4 7" fill="none" stroke="#ffe81a" stroke-width="2.500"/><circle cx="14" cy="16" r="1.700" fill="#ffe81a"/></svg>
    <div class="ml-[28px] -mt-[3px] w-[58px] flex flex-col items-center text-[12px] shrink-0 gap-[5px]"><span>23%</span><span>CPU使用</span></div>
    <svg viewBox="0 0 14 8" class="ml-[15px] w-[13px] h-[8px] shrink-0" fill="none" stroke="#fff" stroke-width="1.300"><path d="M1 7l6-6 6 6"/></svg>
    <svg viewBox="0 0 16 12" class="ml-[9px] w-[16px] h-[12px] shrink-0" fill="none" stroke="#fff"><rect x="3.500" y="3.500" width="11" height="7"/><rect x="5" y="5" width="6" height="4" fill="#fff"/><path d="M1 0v3M4 0v3M0 3h5" /></svg>
    <svg viewBox="0 0 14 14" class="ml-[11px] w-[14px] h-[14px] shrink-0" fill="none" stroke="#ddd"><path d="M1 13C1 6 6 1 13 1M4 13c0-5 4-9 9-9M7 13c0-3 3-6 6-6"/><circle cx="11" cy="12" r="1.500" fill="#fff"/></svg>
    <svg viewBox="0 0 16 14" class="ml-[6px] w-[16px] h-[14px] shrink-0" fill="none" stroke="#fff"><path d="M1 5v4h3l4 4V1L4 5zM10 4c2 2 2 4 0 6M12 2c3 3 3 7 0 10"/></svg>
    <svg viewBox="0 0 24 16" class="ml-[8px] w-[23px] h-[16px] shrink-0" fill="none" stroke="#fff"><rect x=".5" y=".5" width="23" height="15"/><path d="M3 4h18M3 7h18M6 11h12" stroke-dasharray="1.500 1"/></svg>
    <span class="ml-[10px] text-[14px] w-[14px] font-bold shrink-0">中</span>
    <div class="ml-[13px] w-[16px] h-[18px] bg-[#f0501e] rounded-[3px] flex items-center justify-center font-bold text-[14px] italic shrink-0">S</div>
    <div class="ml-[14px] -mt-[4px] w-[66px] flex flex-col items-center text-[12px] shrink-0 gap-[8px]"><span class="pl-[2px]">13:02</span><span class="text-[12.5px]">2017/11/15</span></div>
    <div class="relative ml-[21px] w-[20px] h-[28px] shrink-0">
      <svg viewBox="0 0 16 14" class="w-[16px] h-[14px] mt-[2px]"><path d="M0 0h16v11H6l-3 3v-3H0z" fill="#fff"/><path d="M3 3h10M3 6h10" stroke="#111"/></svg>
      <div class="absolute left-[1px] top-[10px] w-[21px] h-[21px] rounded-full bg-[#3a3a3a] border border-[#777] flex items-center justify-center text-[12px] font-bold">20</div>
    </div>
    <div class="absolute bottom-0 left-[721px] w-[34px] h-[2px] bg-[#76b9ed]"></div>
    <div class="absolute bottom-0 left-[764px] w-[34px] h-[2px] bg-[#76b9ed]"></div>
    <div class="absolute bottom-0 left-[803px] w-[41px] h-[2px] bg-[#76b9ed]"></div>
    <div class="absolute bottom-0 left-[849px] w-[33px] h-[2px] bg-[#76b9ed]"></div>
    <div class="absolute bottom-0 left-[891px] w-[32px] h-[2px] bg-[#76b9ed]"></div>
    <div class="absolute bottom-0 left-[933px] w-[33px] h-[2px] bg-[#76b9ed]"></div>
  </div>

  <!-- floating: score badge -->
  <div class="absolute left-[494px] -top-[20px] w-[40px] h-[40px] rounded-full bg-[#36b34a] border border-[#9bd8a6] shadow-[0_2px_4px_rgba(0,0,0,0.35)]"></div>
  <span class="absolute left-[507px] top-[2px] text-white font-bold text-[12px]">72</span>

  <!-- floating: IME bar -->
  <div class="absolute left-[992px] top-[4px] w-[163px] h-[22px] bg-white border border-[#c8d6e4] flex items-center text-[#1a6fc0]">
    <span class="ml-[13px] text-[14px] font-bold">中</span>
    <span class="ml-[8px] text-[13px] font-bold w-[10px]">°,</span>
    <svg viewBox="0 0 12 16" class="ml-[12px] w-[12px] h-[16px] shrink-0" fill="#1a6fc0"><rect x="3" width="6" height="10" rx="3"/><path d="M1 7c0 5 10 5 10 0M6 11v4M3 15.500h6" fill="none" stroke="#1a6fc0" stroke-width="1.300"/></svg>
    <svg viewBox="0 0 16 13" class="ml-[8px] w-[16px] h-[13px] shrink-0"><rect width="16" height="13" rx="1" fill="#1a6fc0"/><path d="M2 3h12M2 6h12M4 10h8" stroke="#fff" stroke-dasharray="1.500 1"/></svg>
    <svg viewBox="0 0 16 16" class="ml-[9px] w-[16px] h-[16px] shrink-0"><circle cx="7" cy="4" r="3" fill="#bccad6"/><path d="M1 15c0-7 10-7 10 0z" fill="#bccad6"/><rect x="9" y="9" width="7" height="6" fill="#fff" stroke="#9eb2c4"/></svg>
    <svg viewBox="0 0 16 15" class="ml-[6px] w-[16px] h-[15px] shrink-0" fill="#1a6fc0"><path d="M5 0h6l5 3-2 4-2-1v9H4V6L2 7 0 3z"/></svg>
    <svg viewBox="0 0 14 15" class="ml-[5px] w-[14px] h-[15px] shrink-0" fill="none" stroke="#1a6fc0" stroke-width="2.300"><path d="M1 14l7-7"/><path d="M8 7c-1-3 1-5 4-5l-2 2 1 2 2-1c0 3-2 4-5 2z" fill="#1a6fc0" stroke-width="1"/></svg>
  </div>
  <div class="absolute left-[973px] top-[4px] w-[27px] h-[24px] rounded-[4px] bg-[#f0501e] flex items-center justify-center text-white font-bold italic text-[24px] rotate-[-6deg] font-['Liberation_Sans',sans-serif]">S</div>
</div>
</body>
</html>
